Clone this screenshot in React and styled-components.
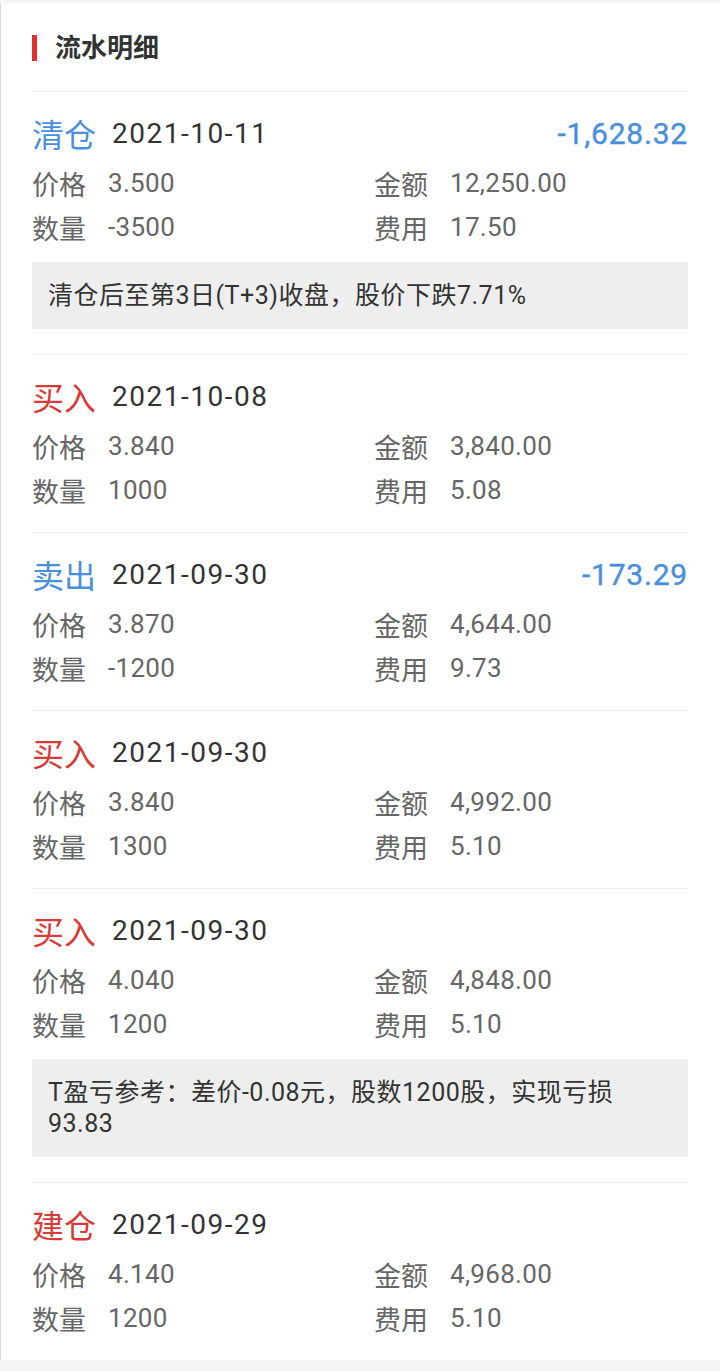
import React from "react";
import styled, { createGlobalStyle } from "styled-components";

const BLUE = "#4a8fdc";
const RED = "#d63b37";

const Global = createGlobalStyle`
  html, body {
    margin: 0;
    padding: 0;
    background: #f4f4f4;
  }
  body {
    font-family: Roboto, "Noto Sans CJK SC", sans-serif;
    -webkit-font-smoothing: antialiased;
  }
`;

const Page = styled.div`
  padding-top: 3px;
  min-height: 1371px;
  box-sizing: border-box;
`;

const Card = styled.section`
  background: #fff;
  border-left: 1px solid #d8d8d8;
  padding: 0 32px 0 31px;
`;

const Title = styled.h2`
  display: flex;
  align-items: center;
  gap: 18px;
  margin: 0;
  padding: 32px 0 30px;
  height: 26px;
  line-height: 26px;
  font-size: 26px;
  font-weight: 700;
  color: #333;
  border-bottom: 1px solid #eeeeee;

  &::before {
    content: "";
    display: block;
    width: 5px;
    height: 26px;
    background: #e0312d;
  }
`;

const Entry = styled.div`
  padding: 13px 0 20px;
  border-bottom: 1px solid #eeeeee;

  &:last-child {
    border-bottom: none;
  }
`;

const Head = styled.div`
  display: flex;
  align-items: center;
  height: 56px;
`;

const Kind = styled.span`
  font-size: 32px;
  color: ${p => (p.tone === "blue" ? BLUE : RED)};
  margin-right: 16px;
`;

const Date = styled.span`
  font-size: 28px;
  letter-spacing: 1.5px;
  color: #333;
`;

const Amount = styled.span`
  margin-left: auto;
  font-size: 30px;
  font-weight: 400;
  letter-spacing: 0.8px;
  color: ${BLUE};
  -webkit-text-stroke: 0.4px ${BLUE};
`;

const Grid = styled.div`
  display: grid;
  grid-template-columns: 342px 1fr;
`;

const Field = styled.div`
  display: flex;
  align-items: center;
  height: 44px;
  gap: 22px;
  font-size: 27px;
  color: #666;
`;

const Value = styled.span`
  font-size: 26px;
  letter-spacing: 0.3px;
`;

const Note = styled.div`
  margin: 13px 0 5px;
  padding: 18px 30px 18px 16px;
  background: #eeeeee;
  font-size: 25px;
  letter-spacing: 0.5px;
  line-height: 31px;
  color: #333;
`;

const entries = [
  {
    kind: "清仓",
    tone: "blue",
    date: "2021-10-11",
    amount: "-1,628.32",
    price: "3.500",
    total: "12,250.00",
    qty: "-3500",
    fee: "17.50",
    note: "清仓后至第3日(T+3)收盘，股价下跌7.71%"
  },
  {
    kind: "买入",
    tone: "red",
    date: "2021-10-08",
    price: "3.840",
    total: "3,840.00",
    qty: "1000",
    fee: "5.08"
  },
  {
    kind: "卖出",
    tone: "blue",
    date: "2021-09-30",
    amount: "-173.29",
    price: "3.870",
    total: "4,644.00",
    qty: "-1200",
    fee: "9.73"
  },
  {
    kind: "买入",
    tone: "red",
    date: "2021-09-30",
    price: "3.840",
    total: "4,992.00",
    qty: "1300",
    fee: "5.10"
  },
  {
    kind: "买入",
    tone: "red",
    date: "2021-09-30",
    price: "4.040",
    total: "4,848.00",
    qty: "1200",
    fee: "5.10",
    note: "T盈亏参考：差价-0.08元，股数1200股，实现亏损93.83"
  },
  {
    kind: "建仓",
    tone: "red",
    date: "2021-09-29",
    price: "4.140",
    total: "4,968.00",
    qty: "1200",
    fee: "5.10"
  }
];

const Row = ({ label, value }) => (
  <Field>
    {label}
    <Value>{value}</Value>
  </Field>
);

export default function App() {
  return (
    <Page>
      <Global />
      <Card>
        <Title>流水明细</Title>
        {entries.map((e, i) => (
          <Entry key={i}>
            <Head>
              <Kind tone={e.tone}>{e.kind}</Kind>
              <Date>{e.date}</Date>
              {e.amount && <Amount>{e.amount}</Amount>}
            </Head>
            <Grid>
              <Row label="价格" value={e.price} />
              <Row label="金额" value={e.total} />
              <Row label="数量" value={e.qty} />
              <Row label="费用" value={e.fee} />
            </Grid>
            {e.note && <Note>{e.note}</Note>}
          </Entry>
        ))}
      </Card>
    </Page>
  );
}
